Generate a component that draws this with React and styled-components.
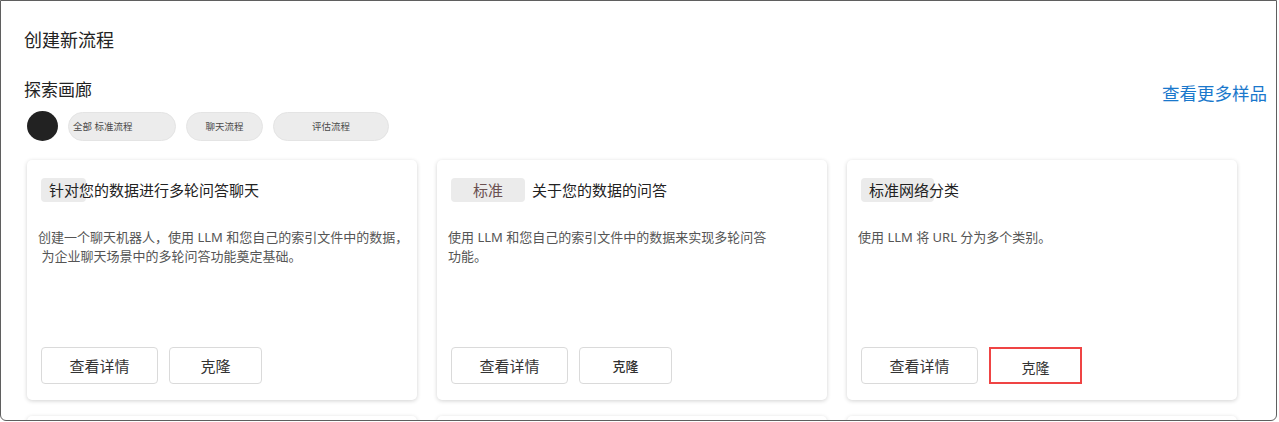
import React from 'react';
import styled, {createGlobalStyle} from "styled-components";

const GlobalStyle = createGlobalStyle`
  body {
    margin: 0;
    background: #fff;
    font-family: "Noto Sans", "Noto Sans CJK SC", sans-serif;
  }
`;

const Frame = styled.div`
  box-sizing: border-box;
  width: 1277px;
  height: 421px;
  border: 1px solid #5f5f5f;
  border-radius: 0 0 6px 6px;
  overflow: hidden;
  padding: 27px 9px 0 23px;
  color: #222;
`;

const PageTitle = styled.div`
  font-size: 18px;
  line-height: 24px;
  height: 24px;
`;

const GalleryHeader = styled.div`
  display: flex;
  align-items: flex-start;
  justify-content: space-between;
  margin-top: 26px;
  height: 24px;
`;

const GalleryTitle = styled.div`
  font-size: 17px;
  line-height: 24px;
`;

const MoreLink = styled.a`
  font-size: 17.5px;
  line-height: 24px;
  margin-top: 3px;
  color: #1a78cc;
  cursor: pointer;
`;

const Chips = styled.div`
  display: flex;
  align-items: center;
  gap: 10px;
  margin-top: 9px;
  padding-left: 3px;
`;

const Dot = styled.div`
  width: 31px;
  height: 30px;
  border-radius: 50%;
  background: #222;
`;

const Chip = styled.div`
  box-sizing: border-box;
  display: flex;
  align-items: center;
  justify-content: ${({$left}) => $left ? "flex-start" : "center"};
  width: ${({$w}) => $w}px;
  height: 29px;
  padding: 0 4px;
  border-radius: 15px;
  background: #ececec;
  border: 1px solid #e4e4e4;
  font-size: 9.5px;
  color: #4a4a4a;
`;

const Grid = styled.div`
  display: grid;
  grid-template-columns: repeat(3, 390px);
  column-gap: 20px;
  row-gap: 16px;
  margin-top: 19px;
  padding-left: 3px;
`;

const Card = styled.div`
  box-sizing: border-box;
  height: 240px;
  display: flex;
  flex-direction: column;
  padding: 18px 14px 16px;
  border-radius: 5px;
  background: #fff;
  box-shadow: 0 1px 4px rgba(0, 0, 0, 0.18);
`;

const TitleRow = styled.div`
  position: relative;
  display: flex;
  align-items: center;
  gap: 7px;
  height: 24px;
  font-size: 15px;
  line-height: 24px;
  color: #222;
`;

const Highlight = styled.span`
  position: absolute;
  left: 0;
  top: 0;
  width: ${({$w}) => $w}px;
  height: 24px;
  border-radius: 4px;
  background: #ebebeb;
`;

const TitleText = styled.span`
  position: relative;
  padding-left: ${({$pad}) => $pad}px;
`;

const Tag = styled.span`
  display: inline-flex;
  align-items: center;
  justify-content: center;
  width: 74px;
  height: 24px;
  border-radius: 4px;
  background: #ebebeb;
  color: #6a5050;
`;

const Desc = styled.div`
  margin: 26px 0 0 -3px;
  font-size: 13px;
  line-height: 19px;
  color: #555;
  white-space: pre;
`;

const Actions = styled.div`
  display: flex;
  gap: 11px;
  margin-top: auto;
`;

const Button = styled.button`
  box-sizing: border-box;
  width: ${({$w}) => $w}px;
  height: 37px;
  background: #fff;
  border: ${({$active}) => $active ? "2px solid #ef4444" : "1px solid #dadada"};
  border-radius: ${({$active}) => $active ? "0" : "4px"};
  font-family: inherit;
  font-size: ${({$size}) => $size || 15}px;
  font-weight: ${({$bold}) => $bold ? 500 : 400};
  color: #333;
  padding: ${({$active}) => $active ? "3px 0 0" : "0"};
  cursor: pointer;
`;

const flows = [
    {
        highlight: 45,
        title: "针对您的数据进行多轮问答聊天",
        desc: "创建一个聊天机器人，使用 LLM 和您自己的索引文件中的数据，\n 为企业聊天场景中的多轮问答功能奠定基础。",
        clone: {size: 15},
    },
    {
        tag: "标准",
        title: "关于您的数据的问答",
        desc: "使用 LLM 和您自己的索引文件中的数据来实现多轮问答\n功能。",
        clone: {size: 13, bold: true},
    },
    {
        highlight: 73,
        title: "标准网络分类",
        desc: "使用 LLM 将 URL 分为多个类别。",
        clone: {size: 14, active: true},
    },
];

const FlowCard = ({flow}) => (
    <Card>
        <TitleRow>
            {flow.highlight && <Highlight $w={flow.highlight}/>}
            {flow.tag && <Tag>{flow.tag}</Tag>}
            <TitleText $pad={flow.highlight ? 8 : 0}>{flow.title}</TitleText>
        </TitleRow>
        <Desc>{flow.desc}</Desc>
        <Actions>
            <Button $w={117}>查看详情</Button>
            <Button $w={93} $size={flow.clone.size} $bold={flow.clone.bold} $active={flow.clone.active}>克隆</Button>
        </Actions>
    </Card>
);

const App = () => {
    return (
        <>
            <GlobalStyle/>
            <Frame>
                <PageTitle>创建新流程</PageTitle>
                <GalleryHeader>
                    <GalleryTitle>探索画廊</GalleryTitle>
                    <MoreLink>查看更多样品</MoreLink>
                </GalleryHeader>
                <Chips>
                    <Dot/>
                    <Chip $w={108} $left>全部 标准流程</Chip>
                    <Chip $w={77}>聊天流程</Chip>
                    <Chip $w={116}>评估流程</Chip>
                </Chips>
                <Grid>
                    {flows.map((flow, i) => <FlowCard key={i} flow={flow}/>)}
                    {flows.map((flow, i) => <Card key={"next" + i}/>)}
                </Grid>
            </Frame>
        </>
    );
};

export default App;
